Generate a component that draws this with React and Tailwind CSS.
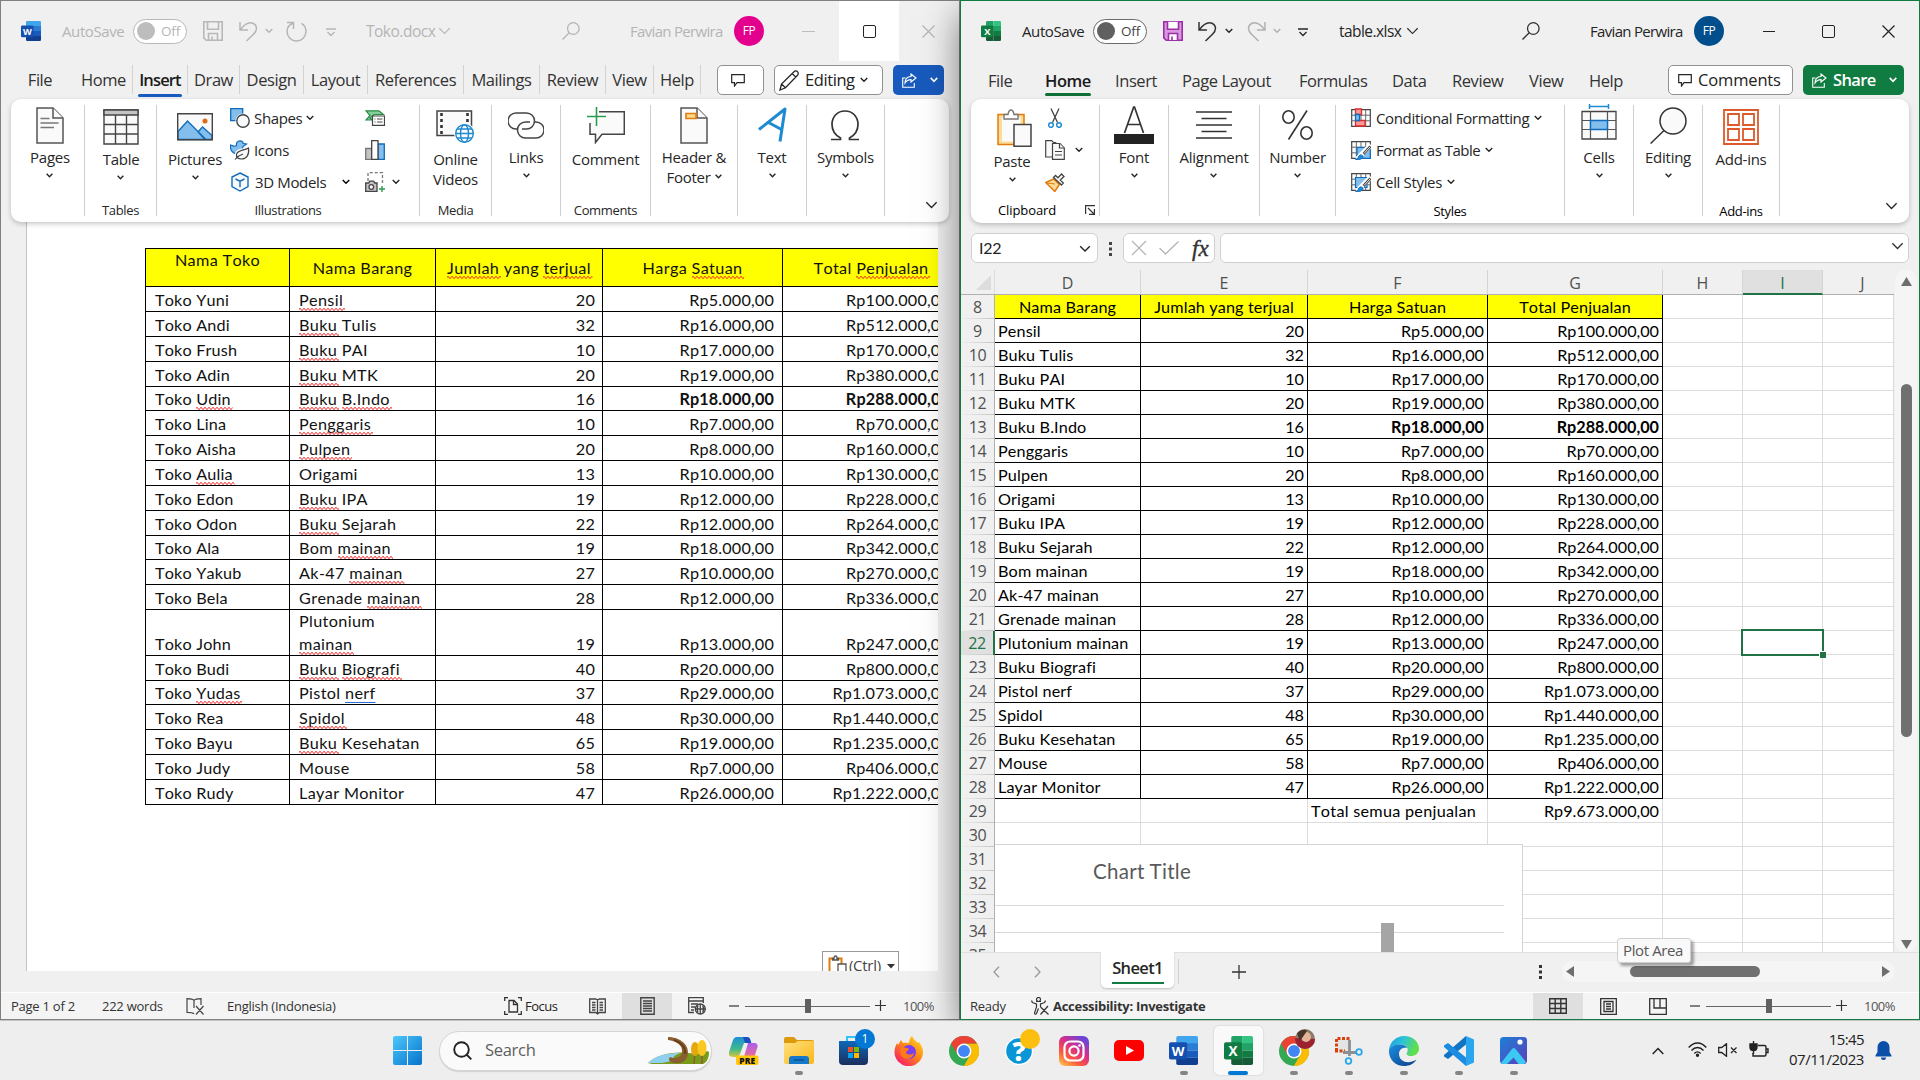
import React from "react";

/* ---------- small glyphs ---------- */
const Chev = ({ w = 8, className = "", sw = 1.4 }) => (
  <svg width={w} height={w * 0.6 + 1} viewBox="0 0 10 7" fill="none" stroke="currentColor" strokeWidth={(sw * 10) / w} className={className}>
    <path d="M.9 1l4.1 4.2L9.1 1" />
  </svg>
);

const WordLogo = ({ s = 20 }) => (
  <svg width={s} height={s} viewBox="0 0 32 32">
    <path d="M10 0h20a2 2 0 012 2v7H8V2a2 2 0 012-2z" fill="#41a5ee" />
    <path d="M8 8h24v8H8z" fill="#2b7cd3" />
    <path d="M8 16h24v8H8z" fill="#185abd" />
    <path d="M8 24h24v6a2 2 0 01-2 2H10a2 2 0 01-2-2z" fill="#103f91" />
    <rect x="0" y="7" width="20" height="19" rx="2" fill="#1650ae" />
    <text x="10" y="22" textAnchor="middle" fontSize="14.5" fontWeight="700" fill="#fff" fontFamily="Open Sans">W</text>
  </svg>
);

const ExcelLogo = ({ s = 20 }) => (
  <svg width={s} height={s} viewBox="0 0 32 32">
    <path d="M10 0h10v9H8V2a2 2 0 012-2z" fill="#21a366" />
    <path d="M20 0h10a2 2 0 012 2v7H20z" fill="#33c481" />
    <path d="M8 8h12v8H8z" fill="#107c41" />
    <path d="M20 8h12v8H20z" fill="#21a366" />
    <path d="M20 16h12v8H20z" fill="#107c41" />
    <path d="M8 16h12v16H10a2 2 0 01-2-2z" fill="#185c37" />
    <path d="M20 24h12v6a2 2 0 01-2 2H20z" fill="#185c37" />
    <rect x="0" y="7" width="20" height="19" rx="2" fill="#107c41" />
    <text x="10" y="22" textAnchor="middle" fontSize="15" fontWeight="700" fill="#fff" fontFamily="Open Sans">X</text>
  </svg>
);

const SaveIcon = ({ color, fill }) => (
  <svg width="20" height="20" viewBox="0 0 20 20" stroke={color} strokeWidth="1.6">
    <path d="M.8 .8h18.4v18.4H3.2L.8 16.8z" fill={fill} />
    <path d="M4.500 .8v7.500h11V.8" fill={fill === "none" ? "none" : "#fff"} />
    <path d="M5.500 19v-6.500h9V19M9 19v-3.500" fill={fill === "none" ? "none" : "#fff"} />
  </svg>
);

const Undo = ({ flip }) => (
  <svg width="19" height="21" viewBox="0 0 19 21" fill="none" stroke="currentColor" strokeWidth="1.5" className={flip ? "-scale-x-100" : ""}>
    <path d="M1 1v8h8M1.500 8.500C5 4 8 1.800 11.500 1.800c4 0 6 3 6 5.500 0 2.500-1 4-3 6L7.500 20" />
  </svg>
);

const Redo = () => (
  <svg width="21" height="21" viewBox="0 0 21 21" fill="none" stroke="currentColor" strokeWidth="1.5">
    <path d="M1 1.500h6.500V8M7 2.200C3.500 3.500 1 6.500 1 10.500a9.500 9.500 0 0019 0c0-3.500-1.600-6.500-4.500-8.200" />
  </svg>
);

const Qat = () => (
  <svg width="10" height="9" viewBox="0 0 10 9" fill="none" stroke="currentColor" strokeWidth="1.3">
    <path d="M0 1h10M1.500 4l3.500 3.500L8.500 4" />
  </svg>
);

const Search = ({ w = 18, fill = "none", sw = 1.3 }) => (
  <svg width={w} height={w} viewBox="0 0 18 18" fill="none" stroke="currentColor" strokeWidth={sw}>
    <circle cx="11.300" cy="6.500" r="5.800" fill={fill} />
    <path d="M7.200 10.800L.5 17.500" />
  </svg>
);

const Bubble = () => (
  <svg width="14" height="13" viewBox="0 0 14 13" fill="none" stroke="#262626" strokeWidth="1.2">
    <path d="M.7 .7h12.600v8H6L3.500 12V8.700H.7z" />
  </svg>
);

const ShareIcon = () => (
  <svg width="15" height="15" viewBox="0 0 15 15" fill="none" stroke="#fff" strokeWidth="1.1">
    <path d="M3.500 5H.7v9.300h11.600V10M9 1l5 4-5 4V6.600C6 6.600 4.500 7.500 3 10c0-4 2.500-6.300 6-6.500z" />
  </svg>
);

const Pencil = () => (
  <svg width="21" height="21" viewBox="0 0 21 21" fill="none" stroke="#262626" strokeWidth="1.3">
    <path d="M1 20l1.500-6L15 1.700a2.400 2.400 0 013.500 0 2.400 2.400 0 010 3.500L6.500 17.800zM13.200 3.500l3.600 3.600M2.500 14l4 3.800" />
  </svg>
);

/* ---------- ribbon icons ---------- */
const dk = "#444";
const PageIcon = ({ header }) => (
  <svg width="28" height="37" viewBox="0 0 28 37" fill="#fafafa" stroke="#555" strokeWidth="1.5">
    <path d="M1 1h16l10 10v25H1z" />
    <path d="M17 1v10h10" />
    {header ? <path d="M6 6.500h10v5H6z" fill="#fcd98a" stroke="#e07b0e" strokeWidth="1.600" /> : <path d="M4.500 11.500h9M4.500 16h18M4.500 20.500h13.500" stroke="#777" />}
  </svg>
);
const TableIcon = () => (
  <svg width="36" height="36" viewBox="0 0 36 36" fill="#fafafa" stroke="#444" strokeWidth="1.400">
    <path d="M1 1h34v34H1z" />
    <path d="M1 1h34v5H1z" fill="#c4c4c4" />
    <path d="M12.500 6v29M23.500 6v29M1 15.500h34M1 25h34" />
  </svg>
);
const PicIcon = () => (
  <svg width="36" height="28" viewBox="0 0 36 28">
    <path d="M.7 .7h34.600v26H.7z" fill="#fafafa" />
    <path d="M1 18.500l9.500-10.500L29 26.500H1zM21 19l4.500-5L35 22.500v4h-7z" fill="#83beec" stroke="#0f6cbd" strokeWidth="1.300" />
    <circle cx="28" cy="8" r="2.500" fill="#dd6b10" />
    <path d="M.7 .7h34.600v26H.7z" fill="none" stroke="#444" strokeWidth="1.400" />
  </svg>
);
const ShapesIcon = () => (
  <svg width="20" height="20" viewBox="0 0 20 20">
    <path d="M.7 .7h12v12h-12z" fill="#83beec" stroke="#0f6cbd" strokeWidth="1.300" />
    <circle cx="13" cy="13" r="7.600" fill="#fff" />
    <circle cx="13" cy="13" r="6.200" fill="#fafafa" stroke={dk} strokeWidth="1.400" />
  </svg>
);
const IconsIcon = () => (
  <svg width="20" height="20" viewBox="0 0 20 20">
    <path d="M.5 5c2 1 4 1.500 6 .8-.5-3 1-5 3.500-5 2 0 3 1 3.200 2.500l3.300.7-3.500 2.500c0 2-1 3.500-2.500 4.500L6 14C2 12.500 0 9 .5 5z" fill="#83beec" stroke="#0f6cbd" strokeWidth="1.200" />
    <path d="M18.500 8c1 7-2 11-7 11-3.500 0-5.500-2-5-4.500C7 10 13 11 18.500 8z" fill="#fafafa" stroke="#fff" strokeWidth="3.500" />
    <path d="M18.500 8c1 7-2 11-7 11-3.500 0-5.500-2-5-4.500C7 10 13 11 18.500 8zM5 19.500c2-2.500 4.500-4.500 8-5.500" fill="#fafafa" stroke={dk} strokeWidth="1.200" />
  </svg>
);
const CubeIcon = () => (
  <svg width="18" height="20" viewBox="0 0 18 20" fill="#fafafa" stroke="#0f6cbd" strokeWidth="1.400">
    <path d="M9 1l8 4v9.500L9 19l-8-4.500V5zM4.500 7L9 9.200 13.500 7M9 9.200v6" />
  </svg>
);
const SmartArt = () => (
  <svg width="20" height="16" viewBox="0 0 20 16">
    <path d="M1 .8h13l4.500 3.700H9L5 8l2.500 2L1 10l4-4.500z" fill="#83cf9a" stroke="#2a8b45" strokeWidth="1.200" />
    <path d="M7.500 6h12v9.300h-12z" fill="#fff" stroke={dk} strokeWidth="1.200" />
    <path d="M9.500 9h1M12 9h5.500M9.500 12h1M12 12h5.500" stroke={dk} />
  </svg>
);
const BarsIcon = () => (
  <svg width="20" height="20" viewBox="0 0 20 20" strokeWidth="1.300">
    <path d="M.7 8.500h6v11h-6z" fill="#c4c4c4" stroke="#777" />
    <path d="M13 4h6.300v15.300H13z" fill="#83beec" stroke="#0f6cbd" />
    <path d="M6.700 .7H13v18.600H6.700z" fill="#fff" stroke={dk} />
  </svg>
);
const ShotIcon = () => (
  <svg width="20" height="20" viewBox="0 0 20 20" fill="none">
    <path d="M3 9V.7h14.500V13" stroke="#777" strokeWidth="1.300" strokeDasharray="3 2" />
    <path d="M.7 11h3l1-1.800h4l1 1.800H12v8.300H.7z" fill="#c4c4c4" stroke={dk} strokeWidth="1.300" />
    <circle cx="6.300" cy="15" r="2.300" fill="#fff" stroke={dk} strokeWidth="1.300" />
    <path d="M17 14v6M14 17h6" stroke="#2a9b4c" strokeWidth="1.400" />
  </svg>
);
const VideoIcon = () => (
  <svg width="39" height="35" viewBox="0 0 39 35">
    <path d="M1 1h34.500v24.500H1z" fill="#fafafa" stroke="#444" strokeWidth="1.500" />
    <path d="M5.500 3v22M31.500 3v12" stroke="#333" strokeWidth="2.600" strokeDasharray="3 3" />
    <circle cx="28.500" cy="23.500" r="10.500" fill="#fff" />
    <g fill="none" stroke="#1e8ad1" strokeWidth="1.400">
      <circle cx="28.500" cy="23.500" r="8.800" fill="#fafafa" />
      <ellipse cx="28.500" cy="23.500" rx="4" ry="8.800" />
      <path d="M20 23.500h17M21 19h15M21 28h15" />
    </g>
  </svg>
);
const LinkIcon = () => (
  <svg width="36" height="27" viewBox="0 0 36 27" fill="none" stroke="#444" strokeWidth="1.500">
    <path d="M9 17H8A8 8 0 018 1h10.500a8 8 0 010 16H14" />
    <path d="M27 10h1a8 8 0 010 16H17.500a8 8 0 010-16H22" />
  </svg>
);
const CommentIcon = () => (
  <svg width="38" height="37" viewBox="0 0 38 37" fill="none">
    <path d="M12 4.700h25.300v22.600H15l-6.500 8.200v-8.200H3V16" fill="#fafafa" stroke="#444" strokeWidth="1.500" />
    <path d="M9.500 0v19M0 9.500h19" stroke="#fff" strokeWidth="4" />
    <path d="M9.500 0v19M0 9.500h19" stroke="#2a9b4c" strokeWidth="1.600" />
  </svg>
);
const AIcon = () => (
  <svg width="29" height="36" viewBox="0 0 29 36" fill="none" stroke="#1e8ad1" strokeWidth="3" strokeLinejoin="round">
    <path d="M1 22.500L27 2 22 34.500M10.500 15.500l13 7" />
  </svg>
);
const OmegaIcon = () => (
  <svg width="30" height="31" viewBox="0 0 30 31" fill="none" stroke="#333" strokeWidth="1.700">
    <path d="M1 29.500h9.500v-1.500C5 25 2 20.500 2 14.500 2 6.500 7.500 1 15 1s13 5.500 13 13.500c0 6-3 10.500-8.500 13.500v1.500H29" />
  </svg>
);
const PasteIcon = () => (
  <svg width="35" height="38" viewBox="0 0 35 38">
    <path d="M1 5.500h26v30H1z" fill="#fcdc98" stroke="#e07b0e" strokeWidth="1.500" />
    <path d="M5 8.500h18.500v24H5z" fill="#fafafa" />
    <path d="M7 5.500h4c.5-3 1.500-4.500 3-4.500s2.500 1.500 3 4.500h4v4.500H7z" fill="#fff" stroke="#777" strokeWidth="1.400" />
    <path d="M17 15.500h17v21.800H17z" fill="#fafafa" stroke="#444" strokeWidth="1.500" />
  </svg>
);
const CutIcon = () => (
  <svg width="14" height="20" viewBox="0 0 14 20" fill="none" strokeWidth="1.300">
    <path d="M3 .5l6.500 14M11 .5l-6.500 14" stroke={dk} />
    <circle cx="3" cy="17" r="2.300" stroke="#1e8ad1" strokeWidth="1.500" />
    <circle cx="11" cy="17" r="2.300" stroke="#1e8ad1" strokeWidth="1.500" />
  </svg>
);
const CopyIcon = () => (
  <svg width="20" height="20" viewBox="0 0 20 20" fill="#fafafa" stroke={dk} strokeWidth="1.200">
    <path d="M.7 .7h6l2 2h2V17H.7z" />
    <path d="M7.500 3.500H15l4.300 4.500v11.300H7.500z" />
    <path d="M14.500 3.500V8h4.500M10 11.500h7M10 15h7" />
  </svg>
);
const BrushIcon = () => (
  <svg width="20" height="19" viewBox="0 0 20 19">
    <path d="M.8 9.500l8-3.500 5.500 5.500-4.500 7z" fill="#fcdc98" stroke="#e07b0e" strokeWidth="1.500" />
    <path d="M2 10l8 1" stroke="#e07b0e" />
    <path d="M8.500 4.500l8 7.500 1.800-2-3-3L19 3.500 16.500 1 13 4.800l-2.500-2.300z" fill="#fafafa" stroke={dk} strokeWidth="1.300" />
  </svg>
);
const FontIcon = () => (
  <svg width="40" height="38" viewBox="0 0 40 38" fill="none">
    <path d="M10.500 27L19.700 1h.8L29.500 27M13.500 18.500h13" stroke="#333" strokeWidth="1.700" />
    <path d="M0 28h40v10H0z" fill="#222" />
  </svg>
);
const AlignIcon = () => (
  <svg width="36" height="28" viewBox="0 0 36 28" stroke="#333" strokeWidth="1.400">
    <path d="M0 1h36M5.500 7.500h25M0 14h36M5.500 20.500h25M0 27h36" />
  </svg>
);
const PctIcon = () => (
  <svg width="31" height="30" viewBox="0 0 31 30" fill="none" stroke="#333" strokeWidth="1.600">
    <ellipse cx="6.500" cy="7" rx="5.700" ry="6.200" />
    <ellipse cx="24.500" cy="23" rx="5.700" ry="6.200" />
    <path d="M25 .5L6.500 29.500" />
  </svg>
);
const GridMini = ({ kind }) => (
  <svg width="20" height="20" viewBox="0 0 20 20" fill="none">
    <path d="M.7 1.700h18.600v16.600H.7z" fill="#fff" stroke={dk} strokeWidth="1.200" />
    <path d="M.7 7.200h18.600M.7 12.800h18.600M5.300 1.700v16.600M10 1.700v16.600M14.700 1.700v16.600" stroke="#666" strokeWidth="1" />
    {kind === "cf" && (
      <g fill="#f99" stroke="#d92c2c" strokeWidth="1.300">
        <path d="M4.500 1h6v5.500h-6zM4.500 12.500h9.500V18H4.500z" />
        <path d="M4.500 6.500h4v6h-4z" fill="#83beec" stroke="#0f6cbd" />
      </g>
    )}
    {kind === "tbl" && <path d="M6 7.500h13.300v10.800H6z" fill="#83beec" stroke="#0f6cbd" strokeWidth="1.200" />}
    {kind === "cs" && <path d="M4.500 5.500h11.500v10H4.500z" fill="#83beec" stroke="#0f6cbd" strokeWidth="1.200" />}
    {kind !== "cf" && (
      <g>
        <path d="M20 5l-9 9-5 5.500" stroke="#fff" strokeWidth="5" />
        <path d="M19.500 6.500l-7 7.500" stroke={dk} strokeWidth="2.600" />
        <path d="M19 7l-6 6.500" stroke="#fff" strokeWidth=".9" />
        <path d="M4.500 19.300c2.500 0 2.500-1.500 3.500-3.500 1-1.500 3.500-1 4 .5.300 2-3 4-7.500 3z" fill="#1e8ad1" stroke="#0f6cbd" />
      </g>
    )}
  </svg>
);
const CellsIcon = () => (
  <svg width="36" height="36" viewBox="0 0 36 36" fill="none">
    <path d="M1 7.500h34V35H1z" fill="#fafafa" stroke={dk} strokeWidth="1.300" />
    <path d="M1 16.500h34M1 25.500h34M9.500 7.500V35M26.500 7.500V35" stroke="#555" strokeWidth="1.200" />
    <path d="M9.500 16.500h17v9h-17z" fill="#83beec" stroke="#0f6cbd" strokeWidth="1.400" />
    <path d="M8.500 0v5M27.500 0v5M8.500 2.500h19" stroke="#1e8ad1" strokeWidth="1.500" />
  </svg>
);
const EditFind = () => (
  <svg width="37" height="37" viewBox="0 0 37 37" fill="none" stroke="#333" strokeWidth="1.500">
    <circle cx="23" cy="14" r="13" fill="#fafafa" />
    <path d="M14 23.500L.6 36.500" />
  </svg>
);
const AddinsIcon = () => (
  <svg width="36" height="36" viewBox="0 0 36 36" fill="none" stroke="#dd5a2b" strokeWidth="1.800">
    <path d="M1 1h34v34H1z" />
    <path d="M5 5h11v11H5zM20 5h11v11H20zM5 20h11v11H5zM20 20h11v11H20z" />
  </svg>
);

/* ---------- shared chrome ---------- */
const Toggle = ({ border, dot, text }) => (
  <div className={`flex h-[25px] w-[54px] shrink-0 items-center rounded-full border-[1.5px] bg-white pl-[3px] text-[13.500px] ${border}`}>
    <span className={`size-[18px] rounded-full ${dot}`} />
    <span className={`ml-[6px] tracking-[-0.2px] ${text}`}>Off</span>
  </div>
);

const Big = ({ icon, label, label2, chev = true, low, x = "" }) => (
  <div className={`flex flex-col items-center text-[15px] leading-5 tracking-[-0.25px] text-[#262626] ${low ? "pt-[2px]" : ""} ${x}`}>
    <div className="flex h-[40px] items-center justify-center">{icon}</div>
    <div className="mt-[2px] whitespace-nowrap">{label}</div>
    {label2 && <div className="flex items-center gap-[4px] whitespace-nowrap">{label2}</div>}
    {chev && <Chev w={7} className="mt-[6px]" />}
  </div>
);
const Sep = () => <div className="h-[111px] w-px shrink-0 bg-[#cfcfcf]" />;
const Group = ({ w, label, children }) => (
  <div className={`flex h-[117px] shrink-0 flex-col items-center ${w}`}>
    {children}
    {label && <div className="mt-auto mb-[3px] text-[13px] leading-[18px] tracking-[-0.35px] text-[#262626]">{label}</div>}
  </div>
);
const Line = ({ icon, label, chev, gap = "gap-[5px]" }) => (
  <div className={`flex h-8 items-center text-[15px] tracking-[-0.35px] whitespace-nowrap text-[#262626] ${gap}`}>
    <span className="flex w-[20px] shrink-0 justify-center">{icon}</span>
    {label && <span>{label}</span>}
    {chev && <Chev w={8} />}
  </div>
);

const Zoomer = () => (
  <>
    <svg width="10" height="2" className="mb-[1px] shrink-0"><path d="M0 1h10" stroke="#333" strokeWidth="1.200" /></svg>
    <div className="ml-[6px] flex h-[14px] w-[125px] shrink-0 items-center">
      <div className="h-px w-[60px] bg-[#666]" />
      <div className="h-[14px] w-[6px] bg-[#606060]" />
      <div className="h-px flex-1 bg-[#666]" />
    </div>
    <svg width="11" height="11" className="mb-[1px] ml-[5px] shrink-0"><path d="M0 5.500h11M5.500 0v11" stroke="#333" strokeWidth="1.200" /></svg>
    <span className="mt-[2px] ml-[17px] tracking-[-0.5px] text-[#555]">100%</span>
  </>
);

/* ---------- Word ---------- */
const R = ({ children }) => (
  <span className="relative inline-block">
    {children}
    <svg className="absolute bottom-0 left-0 h-[4px] w-[calc(100%+2px)]"><rect width="100%" height="4" fill="url(#squiggle)" /></svg>
  </span>
);
const wordRows = [
  ["h-[25px]", "Toko Yuni", <R>Pensil</R>, "20", "Rp5.000,00", "Rp100.000,00"],
  ["h-[25px]", "Toko Andi", <><R>Buku</R> Tulis</>, "32", "Rp16.000,00", "Rp512.000,00"],
  ["h-[25px]", "Toko Frush", <><R>Buku</R> PAI</>, "10", "Rp17.000,00", "Rp170.000,00"],
  ["h-[25px]", "Toko Adin", <><R>Buku</R> MTK</>, "20", "Rp19.000,00", "Rp380.000,00"],
  ["h-[24px]", <>Toko <R>Udin</R></>, <><R>Buku</R> <R>B.Indo</R></>, "16", "Rp18.000,00", "Rp288.000,00", true],
  ["h-[25px]", "Toko Lina", <R>Penggaris</R>, "10", "Rp7.000,00", "Rp70.000,00"],
  ["h-[25px]", "Toko Aisha", <R>Pulpen</R>, "20", "Rp8.000,00", "Rp160.000,00"],
  ["h-[25px]", <>Toko <R>Aulia</R></>, "Origami", "13", "Rp10.000,00", "Rp130.000,00"],
  ["h-[25px]", "Toko Edon", <><R>Buku</R> IPA</>, "19", "Rp12.000,00", "Rp228.000,00"],
  ["h-[25px]", "Toko Odon", <><R>Buku</R> Sejarah</>, "22", "Rp12.000,00", "Rp264.000,00"],
  ["h-[24px]", "Toko Ala", <>Bom <R>mainan</R></>, "19", "Rp18.000,00", "Rp342.000,00"],
  ["h-[25px]", "Toko Yakub", <>Ak-47 <R>mainan</R></>, "27", "Rp10.000,00", "Rp270.000,00"],
  ["h-[25px]", "Toko Bela", <>Grenade <R>mainan</R></>, "28", "Rp12.000,00", "Rp336.000,00"],
  ["h-[46px]", "Toko John", <>Plutonium<br /><R>mainan</R></>, "19", "Rp13.000,00", "Rp247.000,00"],
  ["h-[25px]", "Toko Budi", <><R>Buku</R> <R>Biografi</R></>, "40", "Rp20.000,00", "Rp800.000,00"],
  ["h-[24px]", <>Toko <R>Yudas</R></>, <>Pistol <span className="underline decoration-[#2b6bd6] decoration-1 underline-offset-[3px]">nerf</span></>, "37", "Rp29.000,00", "Rp1.073.000,00"],
  ["h-[25px]", "Toko Rea", <R>Spidol</R>, "48", "Rp30.000,00", "Rp1.440.000,00"],
  ["h-[25px]", "Toko Bayu", <><R>Buku</R> Kesehatan</>, "65", "Rp19.000,00", "Rp1.235.000,00"],
  ["h-[25px]", "Toko Judy", "Mouse", "58", "Rp7.000,00", "Rp406.000,00"],
  ["h-[25px]", "Toko Rudy", "Layar Monitor", "47", "Rp26.000,00", "Rp1.222.000,00"],
];

const wc = "flex shrink-0 border-r border-b border-black";
const WordTable = () => (
  <div className="relative ml-[118px] mt-[26px] w-[815px] shrink-0 border-t border-l border-black font-[Lato,sans-serif] text-[16.200px] leading-[23px] tracking-[0.18px] text-[#111] [font-kerning:none] [font-variant-ligatures:none]">
    <svg className="absolute size-0">
      <defs>
        <pattern id="squiggle" width="4" height="4" patternUnits="userSpaceOnUse">
          <path d="M-1 3.700L1 1.200 3 3.700 5 1.200" fill="none" stroke="#f02828" strokeWidth="1" />
        </pattern>
      </defs>
    </svg>
    <div className="flex h-[38px] bg-[#ffff00] tracking-[0.350px]">
      <div className={`${wc} w-[144px] justify-center`}><span className="-mt-px">Nama Toko</span></div>
      <div className={`${wc} w-[146px] items-center justify-center`}>Nama Barang</div>
      <div className={`${wc} w-[167px] items-center justify-center whitespace-pre`}><R>Jumlah</R> yang <R>terjual</R></div>
      <div className={`${wc} w-[180px] items-center justify-center whitespace-pre`}>Harga <R>Satuan</R></div>
      <div className={`${wc} w-[177px] items-center justify-center whitespace-pre`}>Total <R>Penjualan</R></div>
    </div>
    {wordRows.map((r, i) => (
      <div key={i} className={`flex ${r[0]}`}>
        <div className={`${wc} w-[144px] items-end pl-[9px]`}><span>{r[1]}</span></div>
        <div className={`${wc} w-[146px] items-end pl-[9px] tracking-[0.350px]`}><span className="whitespace-nowrap">{r[2]}</span></div>
        <div className={`${wc} w-[167px] items-end justify-end pr-[7px]`}>{r[3]}</div>
        <div className={`${wc} w-[180px] items-end justify-end pr-[8px] ${r[6] ? "font-bold tracking-[0.150px]" : ""}`}>{r[4]}</div>
        <div className={`${wc} w-[177px] items-end justify-end pr-[9px] ${r[6] ? "font-bold tracking-[0.150px]" : ""}`}>{r[5]}</div>
      </div>
    ))}
  </div>
);

const WTab = ({ w, children, active, sep = true }) => (
  <div className={`flex h-[29px] shrink-0 items-center justify-center ${sep ? "border-r border-[#d2d2d2]" : ""} ${w}`}>
    <span className={`relative top-px ${active ? "font-semibold tracking-[-0.850px] text-[#1b1b1b]" : ""}`}>
      {children}
      {active && <span className={`absolute -inset-x-px top-[26px] h-[3px] rounded-full ${active}`} />}
    </span>
  </div>
);

const Word = () => (
  <div className="flex h-[1020px] w-[960px] shrink-0 flex-col border border-[#808080] bg-[#f0f0f0]">
    <div className="flex h-[60px] shrink-0 items-center text-[15px] tracking-[-0.4px] text-[#b5b5b5]">
      <div className="ml-[20px] w-[41px]"><WordLogo /></div>
      <div className="w-[71px] shrink-0">AutoSave</div>
      <Toggle border="border-[#b8b8b8]" dot="bg-[#bdbdbd]" text="text-[#b5b5b5]" />
      <div className="ml-[16px] w-[36px]"><SaveIcon color="#b8b8b8" fill="none" /></div>
      <div className="w-[26px]"><Undo /></div>
      <div className="w-[21px]"><Chev w={8} /></div>
      <div className="w-[40px]"><Redo /></div>
      <div className="mt-[2px] w-[40px]"><Qat /></div>
      <div className="w-[72px] pt-px text-[15.500px] tracking-[-0.5px]">Toko.docx</div>
      <div className="w-[124px]"><Chev w={13} sw={1.200} /></div>
      <div className="w-[68px]"><Search /></div>
      <div className="w-[104px] whitespace-nowrap tracking-[-0.68px]">Favian Perwira</div>
      <div className="flex size-[30px] shrink-0 items-center justify-center rounded-full bg-[#e3008c] text-[12px] text-white">FP</div>
      <div className="ml-[38px] h-px w-[13px] bg-[#bdbdbd]" />
      <div className="ml-[24px] flex h-[60px] w-[60px] shrink-0 items-center justify-center bg-white">
        <div className="size-[13px] rounded-[2px] border-[1.500px] border-[#222]" />
      </div>
      <svg width="13" height="13" className="ml-[23px]" stroke="#b5b5b5" strokeWidth="1.200"><path d="M.5.500l12 12M12.500.500l-12 12" /></svg>
    </div>

    <div className="flex h-[38px] shrink-0 items-start pt-[4px] text-[16.500px] tracking-[-0.420px] text-[#333]">
      <WTab w="w-[78px]" sep={false}>File</WTab>
      <WTab w="w-[54px] pr-[4px]">Home</WTab>
      <WTab w="w-[55px]" active="bg-[#185abd]">Insert</WTab>
      <WTab w="w-[52px]">Draw</WTab>
      <WTab w="w-[64px]">Design</WTab>
      <WTab w="w-[64px]">Layout</WTab>
      <WTab w="w-[96px]">References</WTab>
      <WTab w="w-[76px]">Mailings</WTab>
      <WTab w="w-[66px]">Review</WTab>
      <WTab w="w-[48px]">View</WTab>
      <WTab w="w-[47px]">Help</WTab>
      <div className="ml-[16px] flex h-[30px] w-[47px] shrink-0 items-center justify-center rounded-[5px] border border-[#919191] bg-white pr-[6px]"><Bubble /></div>
      <div className="ml-[10px] flex h-[30px] w-[109px] shrink-0 items-center rounded-[5px] border border-[#919191] bg-white pl-[4px] text-[#222]">
        <Pencil /><span className="mx-[5px]">Editing</span><Chev w={8} />
      </div>
      <div className="ml-[10px] flex h-[30px] w-[51px] shrink-0 items-center rounded-[5px] bg-[#185abd] pl-[9px] text-white"><ShareIcon /><Chev w={8} className="ml-[13px]" sw={1.700} /></div>
    </div>

    <div className="z-[1] ml-[10px] flex h-[123px] w-[938px] shrink-0 rounded-[10px] bg-white pt-[6px] shadow-[0_2px_5px_rgba(0,0,0,.22)]">
      <Group w="w-[73px]"><Big x="ml-[5px]" icon={<PageIcon />} label="Pages" /></Group>
      <Sep />
      <Group w="w-[71px]" label="Tables"><Big low x="ml-px" icon={<TableIcon />} label="Table" /></Group>
      <Sep />
      <div className="flex h-[117px] w-[262px] shrink-0 flex-col">
        <div className="flex">
          <Big low x="ml-[12px] w-[52px]" icon={<PicIcon />} label="Pictures" />
          <div className="ml-[9px] w-[135px] -mt-[3px]">
            <Line icon={<ShapesIcon />} label="Shapes" chev gap="gap-[4px]" />
            <Line icon={<IconsIcon />} label="Icons" gap="gap-[4px]" />
            <div className="flex items-center justify-between">
              <Line icon={<CubeIcon />} label="3D Models" />
              <Chev w={8} className="mr-[15px]" />
            </div>
          </div>
          <div className="-mt-[3px]">
            <Line icon={<SmartArt />} />
            <Line icon={<BarsIcon />} />
            <Line icon={<ShotIcon />} chev gap="gap-[7px]" />
          </div>
        </div>
        <div className="mt-auto mb-[3px] text-center text-[13px] leading-[18px] tracking-[-0.35px] text-[#262626]">Illustrations</div>
      </div>
      <Sep />
      <Group w="w-[71px]" label="Media"><Big low chev={false} icon={<VideoIcon />} label="Online" label2="Videos" /></Group>
      <Sep />
      <Group w="w-[68px]"><Big icon={<LinkIcon />} label="Links" /></Group>
      <Sep />
      <Group w="w-[89px]" label="Comments"><Big low chev={false} icon={<div className="-mt-[3px]"><CommentIcon /></div>} label="Comment" /></Group>
      <Sep />
      <Group w="w-[86px]"><Big chev={false} icon={<PageIcon header />} label="Header &amp;" label2={<>Footer <Chev w={7} /></>} /></Group>
      <Sep />
      <Group w="w-[68px]"><Big icon={<AIcon />} label="Text" /></Group>
      <Sep />
      <Group w="w-[77px]"><Big icon={<OmegaIcon />} label="Symbols" /></Group>
      <Sep />
      <div className="flex flex-1 items-end justify-end pr-[11px] pb-[12px] text-[#222]"><Chev w={13} sw={1.300} /></div>
    </div>

    <div className="flex h-[749px] shrink-0 pl-[25px]">
      <div className="flex w-[912px] flex-col overflow-hidden border-l border-[#c4c4c4] bg-white">
        <WordTable />
        <div className="mt-[146px] ml-[795px] flex h-[28px] w-[77px] shrink-0 items-start border border-[#999] pt-[3px] pl-[5px] text-[15px] tracking-[-0.3px] text-[#444]">
          <svg width="19" height="20" viewBox="0 0 19 20" fill="#fff"><path d="M1.500 3.500h12v16h-12z" stroke="#e07b0e" strokeWidth="2" /><path d="M4.500 5V3.500H6C6 2 6.500 1 7.500 1S9 2 9 3.500h1.500V5zM10 9h8v11h-8z" stroke="#555" strokeWidth="1.300" /></svg>
          <span className="ml-[2px] leading-[21px]">(Ctrl)</span>
          <svg width="8" height="5" className="mt-[9px] ml-[6px]"><path d="M0 0h8L4 4.500z" fill="#333" /></svg>
        </div>
      </div>
    </div>
    <div className="h-[21px] shrink-0" />
    <div className="flex h-[27px] shrink-0 items-center border-t border-white bg-[#f4f4f4] text-[13px] tracking-[-0.25px] whitespace-nowrap text-[#333]">
      <div className="ml-[10px] w-[91px] pt-[2px]">Page 1 of 2</div>
      <div className="w-[84px] pt-[2px]">222 words</div>
      <svg width="19" height="17" viewBox="0 0 19 17" fill="none" stroke="#444" strokeWidth="1.200" className="mr-[22px]"><path d="M8 2.500C7 1 5 .7 1 .7v13.600c3 0 6 .2 7 1.700M8 2.500C9 1 11 .7 15 .7V7M8 2.500V10M10 8l7.500 8.500M17.500 8L10 16.500" /></svg>
      <div className="w-[277px] pt-[2px]">English (Indonesia)</div>
      <svg width="18" height="18" viewBox="0 0 18 18" fill="none" stroke="#333" strokeWidth="1.300"><path d="M.7 4V.7H4M14 .7h3.300V4M.7 14v3.300H4M14 17.300h3.300V14M5 3.500h5l3.500 3.500v8H5zM9.500 3.500v4h4" /></svg>
      <div className="ml-[3px] w-[64px] pt-[2px] tracking-[-0.500px] text-[#222]">Focus</div>
      <svg width="17" height="17" viewBox="0 0 17 17" fill="none" stroke="#444" strokeWidth="1.300"><path d="M.7 1h6l1.800 1 1.800-1h6v13.500h-6L8.500 16l-1.800-1.500h-6zM8.500 2v14M3 4.500h3.500M3 7h3.500M3 9.500h3.500M3 12h3.500M10.500 4.500H14M10.500 7H14M10.500 9.500H14M10.500 12H14" /></svg>
      <div className="ml-[16px] flex h-[26px] w-[50px] items-center justify-center bg-[#dfdfdf]">
        <svg width="15" height="18" viewBox="0 0 15 18" fill="none" stroke="#444" strokeWidth="1.400"><path d="M.8 .8h13.400v16.400H.8zM3 4h9M3 6.500h9M3 9h9M3 11.500h9M3 14h9" /></svg>
      </div>
      <svg width="18" height="18" viewBox="0 0 18 18" fill="none" stroke="#444" strokeWidth="1.300" className="mr-[23px] ml-[16px]"><path d="M6 15.500H.7V.7h14.600V6M.7 4h14.600M3 7h7M3 10h4M3 13h3" /><circle cx="12.300" cy="12" r="5" /><path d="M7.500 12h10M12.300 7v10M10 8.500c-1 2-1 5 0 7M14.700 8.500c1 2 1 5 0 7" /></svg>
      <Zoomer />
    </div>
  </div>
);

/* ---------- Excel ---------- */
const xlRows = [
  ["Pensil", "20", "Rp5.000,00", "Rp100.000,00"],
  ["Buku Tulis", "32", "Rp16.000,00", "Rp512.000,00"],
  ["Buku PAI", "10", "Rp17.000,00", "Rp170.000,00"],
  ["Buku MTK", "20", "Rp19.000,00", "Rp380.000,00"],
  ["Buku B.Indo", "16", "Rp18.000,00", "Rp288.000,00"],
  ["Penggaris", "10", "Rp7.000,00", "Rp70.000,00"],
  ["Pulpen", "20", "Rp8.000,00", "Rp160.000,00"],
  ["Origami", "13", "Rp10.000,00", "Rp130.000,00"],
  ["Buku IPA", "19", "Rp12.000,00", "Rp228.000,00"],
  ["Buku Sejarah", "22", "Rp12.000,00", "Rp264.000,00"],
  ["Bom mainan", "19", "Rp18.000,00", "Rp342.000,00"],
  ["Ak-47 mainan", "27", "Rp10.000,00", "Rp270.000,00"],
  ["Grenade mainan", "28", "Rp12.000,00", "Rp336.000,00"],
  ["Plutonium mainan", "19", "Rp13.000,00", "Rp247.000,00"],
  ["Buku Biografi", "40", "Rp20.000,00", "Rp800.000,00"],
  ["Pistol nerf", "37", "Rp29.000,00", "Rp1.073.000,00"],
  ["Spidol", "48", "Rp30.000,00", "Rp1.440.000,00"],
  ["Buku Kesehatan", "65", "Rp19.000,00", "Rp1.235.000,00"],
  ["Mouse", "58", "Rp7.000,00", "Rp406.000,00"],
  ["Layar Monitor", "47", "Rp26.000,00", "Rp1.222.000,00"],
];
const cw = ["w-[146px]", "w-[167px]", "w-[180px]", "w-[175px]", "w-[80px]", "w-[80px]", "w-[71px]"];

const XRow = ({ n }) => {
  const head = n === 8;
  const data = n >= 9 && n <= 28 ? xlRows[n - 9] : null;
  let vals = ["", "", "", ""];
  if (head) vals = ["Nama Barang", "Jumlah yang terjual", "Harga Satuan", "Total Penjualan"];
  if (data) vals = data;
  if (n === 29) vals = ["", "", "Total semua penjualan", "Rp9.673.000,00"];
  const sel = n === 22;
  return (
    <div className="flex h-[24px] shrink-0">
      <div className={`flex w-[34px] shrink-0 flex-col text-[16px] tracking-[-0.3px] ${sel ? "border-r-2 border-[#217346] bg-[#e0e0e0] text-[#217346]" : "border-r border-[#b0b0b0] text-[#505050]"}`}>
        <div className="flex h-[23px] items-center justify-center font-['Open_Sans',sans-serif] leading-none">{n}</div>
        <div className="h-px bg-linear-to-r from-transparent to-[#c4c4c4]" />
      </div>
      {cw.map((w, i) => {
        const dark = i < 4 && n <= 28;
        const align = head ? "justify-center tracking-[0.130px]" : i === 0 ? "pl-[3px] tracking-[0.130px]" : n === 29 && i === 2 ? "pl-[3px] tracking-[0.280px]" : "justify-end pr-[3px]";
        return (
          <div
            key={i}
            className={`relative flex shrink-0 items-center border-r border-b pt-[1px] whitespace-nowrap ${dark ? "border-black" : "border-[#dcdcdc]"} ${head && i < 4 ? "bg-[#ffff00]" : ""} ${align} ${w} ${n === 13 && (i === 2 || i === 3) ? "font-bold" : ""}`}
          >
            {vals[i]}
            {sel && i === 5 && (
              <div className="absolute -top-[2px] -right-[2px] -bottom-[2px] -left-[2px] z-10 border-2 border-[#217346]">
                <div className="absolute -right-[4px] -bottom-[4px] size-[7px] border-t border-l border-white bg-[#217346]" />
              </div>
            )}
          </div>
        );
      })}
    </div>
  );
};

const XTab = ({ w, children, active }) => (
  <div className={`shrink-0 leading-[31px] ${w}`}>
    <span className={`relative inline-block ${active ? "font-semibold tracking-[-0.450px] text-[#1b1b1b]" : ""}`}>
      {children}
      {active && <span className="absolute inset-x-0 top-[28px] h-[3px] rounded-full bg-[#0f7037]" />}
    </span>
  </div>
);

const Excel = () => (
  <div className="relative z-10 flex h-[1020px] w-[960px] shrink-0 flex-col border border-[#107c41] bg-[#f0f0f0] shadow-[0_14px_34px_rgba(0,0,0,.5)]">
    <div className="flex h-[60px] shrink-0 items-center text-[15px] tracking-[-0.4px] text-[#262626]">
      <div className="ml-[20px] w-[41px]"><ExcelLogo /></div>
      <div className="w-[71px] shrink-0">AutoSave</div>
      <Toggle border="border-[#6b6b6b]" dot="bg-[#606060]" text="text-[#444]" />
      <div className="ml-[16px] w-[35px]"><SaveIcon color="#9c2fa8" fill="#d998df" /></div>
      <div className="w-[27px] text-[#333]"><Undo /></div>
      <div className="w-[22px]"><Chev w={8} /></div>
      <div className="w-[26px] text-[#b0b0b0]"><Undo flip /></div>
      <div className="w-[25px] text-[#b0b0b0]"><Chev w={8} /></div>
      <div className="mt-[2px] w-[41px]"><Qat /></div>
      <div className="w-[67px] pt-px text-[15.500px] tracking-[-0.550px]">table.xlsx</div>
      <div className="w-[116px]"><Chev w={13} sw={1.200} /></div>
      <div className="w-[68px] text-[#333]"><Search /></div>
      <div className="w-[104px] whitespace-nowrap tracking-[-0.68px]">Favian Perwira</div>
      <div className="flex size-[30px] shrink-0 items-center justify-center rounded-full bg-[#004e8c] text-[12px] text-white">FP</div>
      <div className="ml-[39px] h-px w-[12px] bg-[#222]" />
      <div className="ml-[47px] size-[13px] rounded-[2px] border-[1.500px] border-[#222]" />
      <svg width="13" height="13" className="ml-[47px]" stroke="#222" strokeWidth="1.200"><path d="M.5.500l12 12M12.500.500l-12 12" /></svg>
    </div>

    <div className="flex h-[38px] shrink-0 pt-[4px] pl-[27px] text-[16.500px] tracking-[-0.420px] whitespace-nowrap text-[#333]">
      <XTab w="w-[57px]">File</XTab>
      <XTab w="w-[70px]" active>Home</XTab>
      <XTab w="w-[67px]">Insert</XTab>
      <XTab w="w-[117px]">Page Layout</XTab>
      <XTab w="w-[93px]">Formulas</XTab>
      <XTab w="w-[60px]">Data</XTab>
      <XTab w="w-[77px]">Review</XTab>
      <XTab w="w-[60px]">View</XTab>
      <XTab w="w-[79px]">Help</XTab>
      <div className="flex h-[30px] w-[125px] shrink-0 items-center rounded-[5px] border border-[#919191] bg-white pl-[9px] text-[#222]"><Bubble /><span className="ml-[6px] tracking-[-0.150px]">Comments</span></div>
      <div className="ml-[10px] flex h-[30px] w-[101px] shrink-0 items-center rounded-[5px] bg-[#107c41] pl-[9px] text-white"><ShareIcon /><span className="ml-[6px] font-semibold tracking-[-0.600px]">Share</span><Chev w={8} className="ml-[13px]" sw={1.700} /></div>
    </div>

    <div className="ml-[10px] flex h-[124px] w-[938px] shrink-0 rounded-[10px] bg-white pt-[6px] shadow-[0_2px_5px_rgba(0,0,0,.22)]">
      <div className="flex h-[117px] w-[128px] shrink-0 flex-col">
        <div className="flex">
          <div className="ml-[20px] w-[42px] pt-[4px]"><Big icon={<div className="-mt-[3px] ml-[5px]"><PasteIcon /></div>} label="Paste" /></div>
          <div className="-mt-[3px] ml-[12px]">
            <Line icon={<CutIcon />} />
            <Line icon={<CopyIcon />} chev gap="gap-[10px]" />
            <Line icon={<BrushIcon />} />
          </div>
        </div>
        <div className="mt-auto mb-[3px] flex items-center justify-between pl-[27px] text-[13px] leading-[18px] tracking-[-0.1px]">
          <span>Clipboard</span>
          <svg width="10" height="10" viewBox="0 0 10 10" fill="none" stroke="#333" strokeWidth="1.200" className="mr-[4px]"><path d="M.6 9V.6H10M3 3l6 6M9.400 4v5.400H4" /></svg>
        </div>
      </div>
      <Sep />
      <Group w="w-[68px]"><Big icon={<FontIcon />} label="Font" /></Group>
      <Sep />
      <Group w="w-[90px]"><Big icon={<AlignIcon />} label="Alignment" /></Group>
      <Sep />
      <Group w="w-[75px]"><Big icon={<PctIcon />} label="Number" /></Group>
      <Sep />
      <div className="flex h-[117px] w-[228px] shrink-0 flex-col">
        <div className="-mt-[3px] pl-[15px]">
          <Line icon={<GridMini kind="cf" />} label="Conditional Formatting" chev />
          <Line icon={<GridMini kind="tbl" />} label={<span className="tracking-[-0.500px]">Format as Table</span>} chev />
          <Line icon={<GridMini kind="cs" />} label="Cell Styles" chev />
        </div>
        <div className="mt-auto mb-[2px] text-center text-[13px] leading-[18px] tracking-[-0.350px]">Styles</div>
      </div>
      <Sep />
      <Group w="w-[68px]"><Big icon={<div className="-mt-[7px]"><CellsIcon /></div>} label="Cells" /></Group>
      <Sep />
      <Group w="w-[68px]"><Big icon={<EditFind />} label="Editing" /></Group>
      <Sep />
      <div className="flex h-[117px] w-[76px] shrink-0 flex-col items-center">
        <Big low chev={false} icon={<AddinsIcon />} label="Add-ins" />
        <div className="mt-auto mb-[2px] text-[13px] leading-[18px] tracking-[-0.350px]">Add-ins</div>
      </div>
      <Sep />
      <div className="flex flex-1 items-end justify-end pr-[11px] pb-[12px] text-[#222]"><Chev w={13} sw={1.300} /></div>
    </div>

    <div className="flex h-[47px] shrink-0 items-start pt-[10px] pl-[10px]">
      <div className="flex h-[30px] w-[127px] items-center justify-between rounded-[6px] border border-[#d0d0d0] bg-white pr-[6px] pl-[7px] font-[Lato,sans-serif] text-[16px] tracking-[-0.300px] text-[#222]">I22<Chev w={12} sw={1.400} className="mt-[2px]" /></div>
      <svg width="3" height="14" className="mt-[9px] ml-[11px]" fill="#444"><path d="M0 0h3v3H0zM0 5.500h3v3H0zM0 11h3v3H0z" /></svg>
      <div className="ml-[11px] flex h-[30px] w-[92px] items-center rounded-[6px] border border-[#d0d0d0] bg-white pl-[7px]">
        <svg width="16" height="16" stroke="#b5b5b5" strokeWidth="1.300"><path d="M1 1l14 14M15 1L1 15" /></svg>
        <svg width="20" height="14" fill="none" stroke="#b5b5b5" strokeWidth="1.300" className="ml-[12px]"><path d="M.5 7l6 6L19.500.500" /></svg>
        <span className="ml-[13px] font-['Liberation_Serif',serif] text-[23px] leading-none text-[#333] italic [-webkit-text-stroke:0.400px_#333]">fx</span>
      </div>
      <div className="ml-[5px] flex h-[30px] w-[689px] items-center justify-end rounded-[6px] border border-[#d0d0d0] bg-white pr-[4px] text-[#333]"><Chev w={13} sw={1.400} className="-mt-[4px]" /></div>
    </div>

    <div className="flex h-[682px] shrink-0">
      <div className="relative flex w-[933px] shrink-0 flex-col overflow-hidden">
        <div className="flex h-[25px] shrink-0 border-b border-[#b0b0b0] text-[16px] text-[#505050]">
          <div className="flex w-[34px] shrink-0 items-center justify-end border-r border-[#dcdcdc] pr-[3px]"><svg width="15" height="15"><path d="M15 0v15H0z" fill="#dcdcdc" /></svg></div>
          {["D", "E", "F", "G", "H", "I", "J"].map((c, i) => (
            <div key={c} className={`flex shrink-0 items-center justify-center border-r border-[#d4d4d4] pt-[2px] leading-none ${c === "I" ? "-mb-px border-b-2 border-b-[#217346] bg-[#e0e0e0] text-[#217346]" : ""} ${c === "J" ? "border-r-0 pl-[8px]" : ""} ${cw[i]}`}>{c}</div>
          ))}
        </div>
        <div className="flex h-[657px] flex-col overflow-hidden font-[Lato,sans-serif] text-[16.200px] leading-[22px] text-black [font-kerning:none] [font-variant-ligatures:none]">
          <div className="bg-[linear-gradient(90deg,#f0f0f0_33px,#fff_33px)]">
            {Array.from({ length: 28 }, (_, i) => <XRow key={i} n={i + 8} />)}
          </div>
        </div>
        <div className="absolute top-[574px] left-[34px] h-[120px] w-[528px] border-t border-r border-[#d4d4d4] bg-white pt-[12px] font-[Lato,sans-serif] text-[#595959]">
          <div className="ml-[98px] h-[48px] text-[20.500px] leading-[28px] tracking-[0.300px]">Chart Title</div>
          <div className="h-px w-[509px] bg-[#d9d9d9]" />
          <div className="flex h-[47px] w-[509px] items-end">
            <div className="h-full w-[386px] pt-[26px]"><div className="h-px bg-[#d9d9d9]" /></div>
            <div className="h-[30px] w-[13px] bg-[#a5a5a5]" />
            <div className="h-full flex-1 pt-[26px]"><div className="h-px bg-[#d9d9d9]" /></div>
          </div>
        </div>
      </div>
      <div className="ml-[1px] flex w-[22px] flex-col items-center rounded-[10px] bg-[#f5f5f5]">
        <svg width="11" height="9" className="mt-[7px]"><path d="M5.500 0L11 9H0z" fill="#6e6e6e" /></svg>
        <div className="mt-[98px] h-[353px] w-[11px] rounded-full bg-[#707070]" />
        <svg width="11" height="9" className="mt-[203px]"><path d="M0 0h11L5.500 9z" fill="#6e6e6e" /></svg>
      </div>
    </div>

    <div className="relative flex h-[40px] shrink-0 items-center border-t border-[#e0e0e0] pb-[2px] text-[#262626]">
      <svg width="7" height="12" fill="none" stroke="#999" strokeWidth="1.300" className="ml-[32px]"><path d="M6 .7L1 6l5 5.300" /></svg>
      <svg width="7" height="12" fill="none" stroke="#999" strokeWidth="1.300" className="ml-[34px]"><path d="M1 .7L6 6l-5 5.300" /></svg>
      <div className="-mt-[3px] ml-[60px] flex h-[36px] w-[73px] flex-col items-center rounded-b-[5px] bg-white shadow-[0_1px_2px_rgba(0,0,0,.2)]">
        <div className="mt-[4px] w-[54px] text-center text-[16.500px] leading-[24px] font-semibold tracking-[-0.650px]">Sheet1</div>
        <div className="mt-[2px] h-[2px] w-[52px] bg-[#107c41]" />
      </div>
      <div className="ml-[4px] h-[25px] w-px bg-[#d0d0d0]" />
      <svg width="14" height="14" stroke="#333" strokeWidth="1.300" className="ml-[53px]"><path d="M0 7h14M7 0v14" /></svg>
      <svg width="3" height="14" className="ml-[293px]" fill="#333"><path d="M0 0h3v3H0zM0 5.500h3v3H0zM0 11h3v3H0z" /></svg>
      <div className="ml-[20px] flex h-[21px] w-[333px] items-center rounded-full bg-[#f5f5f5]">
        <svg width="8" height="11" className="ml-[4px]"><path d="M8 0v11L0 5.500z" fill="#6e6e6e" /></svg>
        <div className="ml-[56px] h-[11px] w-[130px] rounded-full bg-[#707070]" />
        <svg width="8" height="11" className="ml-[122px]"><path d="M0 0v11l8-5.500z" fill="#6e6e6e" /></svg>
      </div>
      <div className="absolute -top-[15px] left-[656px] flex h-[25px] w-[74px] items-center justify-center rounded-[3px] border border-[#d0d0d0] bg-[#f9f9f9] pr-[2px] text-[15px] tracking-[-0.400px] text-[#575757] shadow-[3px_3px_3px_rgba(0,0,0,.35)]">Plot Area</div>
    </div>

    <div className="flex h-[27px] shrink-0 items-center border-t border-white bg-[#f4f4f4] text-[13px] tracking-[-0.250px] whitespace-nowrap text-[#333]">
      <div className="ml-[9px] w-[61px] pt-[2px]">Ready</div>
      <svg width="18" height="18" viewBox="0 0 18 18" fill="none" stroke="#333" strokeWidth="1.200"><circle cx="7.500" cy="2.500" r="2" /><path d="M1 3.500c-.5 1 0 1.800 1 2.200L5.500 7v3l-2 6c0 1.500 1.500 1.500 2 .5l2-5M14 3.500c.5 1 0 1.800-1 2.200L9.500 7v3M5 4.500h5M9.500 10l8 7.500M17 9l-7.500 8.500" /></svg>
      <div className="ml-[4px] w-[480px] pt-[2px] font-bold tracking-[-0.280px]">Accessibility: Investigate</div>
      <div className="flex h-[26px] w-[50px] items-center justify-center bg-[#dfdfdf]">
        <svg width="18" height="16" viewBox="0 0 18 16" fill="none" stroke="#333" strokeWidth="1.400"><path d="M.7 .7h16.600v14.600H.7zM.7 5.500h16.600M.7 10.500h16.600M6.200 .7v14.600M11.800 .7v14.600" /></svg>
      </div>
      <svg width="17" height="17" viewBox="0 0 17 17" fill="none" stroke="#333" strokeWidth="1.300" className="ml-[17px]"><path d="M.7 .7h15.600v15.600H.7zM4 3.500h9v10H4zM6 6h5M6 8.500h5M6 11h5" /></svg>
      <svg width="18" height="17" viewBox="0 0 18 17" fill="none" stroke="#333" strokeWidth="1.300" className="mr-[23px] ml-[32px]"><path d="M.7 .7h16.600v15.600H.7zM5 .7V10h12M11 .7V10" /></svg>
      <Zoomer />
    </div>
  </div>
);

/* ---------- taskbar ---------- */
const Chrome = () => (
  <svg width="30" height="30" viewBox="0 0 48 48">
    <circle cx="24" cy="24" r="24" fill="#34a853" />
    <path d="M44.800 12A24 24 0 0124 48l10.400-18a12 12 0 000-12z" fill="#fbbc04" />
    <path d="M44.800 12H24a12 12 0 0110.400 18L24 48A24 24 0 0044.800 12z" fill="#fbbc04" />
    <path d="M3.200 12L13.600 30 24 24V12h20.800A24 24 0 003.200 12z" fill="#ea4335" />
    <circle cx="24" cy="24" r="12" fill="#fff" />
    <circle cx="24" cy="24" r="9.500" fill="#4285f4" />
  </svg>
);
const Slot = ({ children, dot, active, badge }) => (
  <div className={`relative flex h-[49px] w-[49px] shrink-0 items-center justify-center rounded-[5px] ${active ? "bg-[#f9f9f9] shadow-[0_0_2px_rgba(0,0,0,.2)]" : ""}`}>
    {children}
    {badge}
    {dot && <div className="absolute bottom-0 left-[21px] h-[4px] w-[8px] rounded-full bg-[#858585]" />}
    {active && <div className="absolute bottom-0 left-[14px] h-[4px] w-[20px] rounded-full bg-[#0078d4]" />}
  </div>
);

const Taskbar = () => (
  <div className="relative z-20 flex h-[60px] w-[1920px] shrink-0 items-center border-t border-[#c4c4c4] bg-[#eeeeee]">
    <svg width="29" height="29" viewBox="0 0 29 29" className="ml-[393px] shrink-0">
      <defs><linearGradient id="win" x1="0" y1="0" x2="1" y2="1" gradientUnits="objectBoundingBox"><stop offset="0" stopColor="#4cc8fb" /><stop offset="1" stopColor="#0672cb" /></linearGradient></defs>
      <path d="M2 0h12v14H0V2a2 2 0 012-2zM15 0h12a2 2 0 012 2v12H15zM0 15h14v14H2a2 2 0 01-2-2zM15 15h14v12a2 2 0 01-2 2H15z" fill="url(#win)" />
    </svg>
    <div className="ml-[17px] flex h-[40px] w-[273px] shrink-0 items-center rounded-full border border-[#d6d6d6] bg-[#fafafa] pl-[13px] shadow-[0_1px_1px_rgba(0,0,0,.12)]">
      <svg width="19" height="19" viewBox="0 0 19 19" fill="none" stroke="#222" strokeWidth="1.900"><circle cx="8.500" cy="8.500" r="7.300" fill="#fff" /><path d="M13.500 13.500l4.800 4.800" /></svg>
      <span className="ml-[13px] w-[163px] text-[16.500px] tracking-[-0.300px] text-[#5f5f5f]">Search</span>
      <svg width="61" height="30" viewBox="0 0 61 30">
        <path d="M0 27C8 19 25 15 40 17s19-4 21-1c0 6-2 10-6 12H4z" fill="#7a9a1a" />
        <path d="M0 27c8-8 20-10 32-10-4 2-7 3-6 5s-5 4-12 5z" fill="#8fd0ee" />
        <path d="M20 1c10 0 21 6 20 17-1 8-8 10-14 9-5-1-6-4-4-6 5 2 11 1 12-5 1-7-6-11-14-12z" fill="#8a5f30" />
        <path d="M26 4c8 3 12 8 11 14" fill="none" stroke="#5f3c18" strokeWidth="1.500" />
        <path d="M46 28l1-11M54 28V13" stroke="#8a5f30" strokeWidth="1.500" />
        <ellipse cx="47" cy="13" rx="4" ry="7" fill="#e3a90c" />
        <ellipse cx="54" cy="12" rx="4.500" ry="8" fill="#fbc81f" />
      </svg>
    </div>
    <div className="ml-[7px] flex shrink-0 gap-[6px]">
      <Slot>
        <svg width="30" height="28" viewBox="0 0 30 28">
          <defs>
            <linearGradient id="cpa" x1="0" y1="0" x2="0" y2="1"><stop offset="0" stopColor="#1b8fd6" /><stop offset=".6" stopColor="#3fb98c" /><stop offset="1" stopColor="#d8c53a" /></linearGradient>
            <linearGradient id="cpb" x1="0" y1="0" x2="0" y2="1"><stop offset="0" stopColor="#a95cf0" /><stop offset="1" stopColor="#f2708a" /></linearGradient>
          </defs>
          <path d="M8 0h9c2 0 3 1 3.500 3l.5 3h-6L11 17c-1 2-2 3-4 3H4c-3 0-5-2-4-5L4 3c1-2 2-3 4-3z" fill="url(#cpa)" />
          <path d="M14 0h4c2 0 3 1 3.500 3l.8 3H16z" fill="#1c4fc4" />
          <path d="M19 6h6c3 0 4 2 3.500 4L25 21H12c2 0 3-1 3.500-3z" fill="url(#cpb)" />
          <rect x="7" y="18.500" width="22.500" height="9.500" rx="2" fill="#fdc80a" />
          <text x="18.200" y="26.500" textAnchor="middle" fontSize="8.500" fontWeight="800" fill="#111" fontFamily="Open Sans">PRE</text>
        </svg>
      </Slot>
      <Slot dot>
        <svg width="30" height="27" viewBox="0 0 30 27">
          <defs><linearGradient id="fold" x1="0" y1="0" x2="1" y2="1"><stop offset="0" stopColor="#ffe080" /><stop offset="1" stopColor="#fcb714" /></linearGradient></defs>
          <path d="M0 2a2 2 0 012-2h8l3 3h15a2 2 0 012 2v6H0z" fill="#dd9a0c" />
          <path d="M0 6h11l3-2h14a2 2 0 012 2v19a2 2 0 01-2 2H2a2 2 0 01-2-2z" fill="url(#fold)" />
          <path d="M5 27v-5a3 3 0 013-3h14a3 3 0 013 3v5z" fill="#1579cb" />
          <path d="M10 23h10" stroke="#0a4a8a" strokeWidth="1.300" />
        </svg>
      </Slot>
      <Slot badge={<div className="absolute top-[3px] left-[26px] flex size-[20px] items-center justify-center rounded-full bg-[#0078d4] text-[12px] text-white">1</div>}>
        <svg width="29" height="29" viewBox="0 0 29 29">
          <defs><linearGradient id="st" x1="0" y1="0" x2="0" y2="1"><stop offset="0" stopColor="#0f68b8" /><stop offset="1" stopColor="#1b2f5c" /></linearGradient></defs>
          <path d="M8 6V1h13v5" fill="none" stroke="#31c1f5" strokeWidth="2" />
          <path d="M0 5h29v20a4 4 0 01-4 4H4a4 4 0 01-4-4z" fill="url(#st)" />
          <path d="M9 11h5v5H9z" fill="#f25022" /><path d="M15 11h5v5h-5z" fill="#7fba00" /><path d="M9 17h5v5H9z" fill="#00a4ef" /><path d="M15 17h5v5h-5z" fill="#ffb900" />
        </svg>
      </Slot>
      <Slot>
        <svg width="29" height="30" viewBox="0 0 29 30">
          <defs>
            <linearGradient id="ffx" x1="1" y1="0" x2=".2" y2="1"><stop offset="0" stopColor="#ffe226" /><stop offset=".5" stopColor="#ff8a16" /><stop offset="1" stopColor="#f5156c" /></linearGradient>
          </defs>
          <path d="M18 0c1 3 4 5 6 7l1-1c2 3 4 6 4 10a14 14 0 01-28.500 0C.5 12 2 9 3 7l1 2 3-5 2 3c2-.5 4-.5 6 0 0-3 1-5 3-7z" fill="url(#ffx)" />
          <circle cx="15" cy="16" r="7" fill="#7a3ff0" />
          <path d="M8 11c2 1 5 0 7 2-1 2-3 2-3 4 2 2 5 2 8 0-1 5-6 7-10 5s-5-7-2-11z" fill="#ff7a1a" />
        </svg>
      </Slot>
      <Slot><Chrome /></Slot>
      <Slot badge={<div className="absolute top-[3px] left-[26px] size-[20px] rounded-full bg-[#fdbf0f]" />}>
        <svg width="28" height="30" viewBox="0 0 28 30"><circle cx="14" cy="15" r="14" fill="#fff" /><circle cx="14" cy="15" r="12.800" fill="#0a95d6" /><text x="14" y="24.500" textAnchor="middle" fontSize="26" fontWeight="800" fill="#fff" fontFamily="Open Sans">?</text></svg>
      </Slot>
      <Slot>
        <svg width="30" height="30" viewBox="0 0 30 30">
          <defs><linearGradient id="ig" x1="0" y1="1" x2=".7" y2="0"><stop offset="0" stopColor="#ffd150" /><stop offset=".35" stopColor="#fb5a3c" /><stop offset=".65" stopColor="#d92d8a" /><stop offset="1" stopColor="#6a45d8" /></linearGradient></defs>
          <rect width="30" height="30" rx="6" fill="url(#ig)" />
          <g fill="none" stroke="#fff" strokeWidth="2.200"><rect x="5.500" y="5.500" width="19" height="19" rx="5.500" /><circle cx="15" cy="15" r="4.600" /></g>
          <circle cx="20.500" cy="9.500" r="1.300" fill="#fff" />
        </svg>
      </Slot>
      <Slot><svg width="30" height="21" viewBox="0 0 30 21"><rect width="30" height="21" rx="5" fill="#f00" /><path d="M12 6l8 4.500-8 4.500z" fill="#fff" /></svg></Slot>
      <Slot dot><WordLogo s={29} /></Slot>
      <Slot active><ExcelLogo s={29} /></Slot>
      <Slot dot badge={<svg width="20" height="20" viewBox="0 0 20 20" className="absolute top-[3px] left-[26px]"><defs><clipPath id="av"><circle cx="10" cy="10" r="10" /></clipPath></defs><g clipPath="url(#av)"><path d="M0 0h20v20H0z" fill="#8c7a6a" /><path d="M0 9l20 1v10H0z" fill="#9c2230" /><circle cx="11" cy="8" r="5" fill="#e3b598" /><path d="M2 4c4-4 8-4 10-2L5 12z" fill="#4a3328" /></g></svg>}><Chrome /></Slot>
      <Slot dot>
        <svg width="29" height="29" viewBox="0 0 29 29" fill="none"><path d="M4 3h12v12H4z" fill="#e4e4e4" /><path d="M2.500 15V2.500H17" stroke="#d8400c" strokeWidth="3" strokeDasharray="3 1.500" /><path d="M1 15h10" stroke="#d8400c" strokeWidth="3" strokeDasharray="3 1.500" /><path d="M15.500 4v16M9 16.500h13" stroke="#8a8f94" strokeWidth="2.800" /><circle cx="25" cy="16" r="2.800" stroke="#28a8ea" strokeWidth="1.800" /><circle cx="14.500" cy="25" r="2.800" stroke="#28a8ea" strokeWidth="1.800" /></svg>
      </Slot>
      <Slot dot>
        <svg width="30" height="30" viewBox="0 0 30 30">
          <defs>
            <linearGradient id="eg" x1="0" y1="0" x2="1" y2=".3"><stop offset="0" stopColor="#1f9ce0" /><stop offset=".5" stopColor="#2cc3d8" /><stop offset="1" stopColor="#62e04a" /></linearGradient>
            <linearGradient id="eb" x1="0" y1="0" x2="1" y2="1"><stop offset="0" stopColor="#1b8ee0" /><stop offset="1" stopColor="#0c3f8a" /></linearGradient>
          </defs>
          <path d="M0 14C1 5 8 0 15 0c9 0 15 6 15 12.500 0 5-4 7.500-8 7.500-4 0-5-2-4-3.500 2-3 0-8-6-8C6 8.500 1 11 0 14z" fill="url(#eg)" />
          <path d="M0 14c1-3.500 6-5.500 11-5.500 4 0 6 1.500 7 3.500-5-1-8 2-8 6 0 6 6 9 11 8 3-.3 5-1.500 6.500-2.500C25 28 20 30 15 30 6 30-.5 23 0 14z" fill="url(#eb)" />
        </svg>
      </Slot>
      <Slot dot>
        <svg width="30" height="30" viewBox="0 0 30 30"><path d="M22 0l8 3.500v23L22 30z" fill="#2aa6f0" /><path d="M22 0v8.500L4 23l-4-2.500v-1.500z" fill="#1173c4" /><path d="M22 30v-8.500L4 7 0 9.500V11z" fill="#1c8ce0" /></svg>
      </Slot>
      <Slot dot>
        <svg width="27" height="27" viewBox="0 0 27 27"><defs><linearGradient id="ph" x1="0" y1="0" x2="1" y2="1"><stop offset="0" stopColor="#1d7fd8" /><stop offset="1" stopColor="#5b3fb8" /></linearGradient></defs><rect width="27" height="27" rx="3.500" fill="url(#ph)" /><path d="M1 26l11-14c1-1.200 2.500-1.200 3.500 0L26 25c-.5 1-1.500 2-3 2h-4.500l-5-6.500L7 27H3.500C2.500 27 1.500 26.800 1 26z" fill="#3cc8f2" /><circle cx="20" cy="5" r="2.600" fill="#fff" /></svg>
      </Slot>
    </div>
    <svg width="12" height="8" fill="none" stroke="#222" strokeWidth="1.500" className="ml-[114px] shrink-0"><path d="M.7 7L6 1.500 11.300 7" /></svg>
    <svg width="19" height="15" viewBox="0 0 19 15" fill="none" stroke="#222" strokeWidth="1.400" className="-mt-[3px] ml-[24px] shrink-0"><path d="M.7 5.500C6-.5 13-.5 18.300 5.500M3.500 8.500c3.500-4 8.500-4 12 0M6.300 11.500c2-2.200 4.400-2.200 6.400 0" /><circle cx="9.500" cy="13.300" r="1" fill="#222" /></svg>
    <svg width="20" height="14" viewBox="0 0 20 14" fill="none" stroke="#222" strokeWidth="1.300" className="-mt-[2px] ml-[11px] shrink-0"><path d="M.7 4.500h3L8.500.7v12.600L3.700 9.500h-3zM13 4.500l5.500 5.500M18.500 4.500L13 10" /></svg>
    <svg width="21" height="17" viewBox="0 0 21 17" fill="none" stroke="#222" strokeWidth="1.400" className="-mt-[3px] ml-[10px] shrink-0"><path d="M10 4.500h6.500a1.500 1.500 0 011.500 1.500v7.500a1.500 1.500 0 01-1.500 1.500H5v-3M18.500 8h1.500v3.500h-1.500" /><path d="M5.500 0v3M2 3h7v3c0 2-1.500 3.500-3.500 3.500S2 8 2 6zM5.500 9.500V13" fill="#222" /></svg>
    <div className="-mt-[3px] ml-[13px] w-[82px] shrink-0 text-right text-[15px] leading-[20px] tracking-[-0.450px] text-[#222]">
      <div className="tracking-[-0.600px]">15:45</div>
      <div>07/11/2023</div>
    </div>
    <svg width="17" height="19" viewBox="0 0 17 19" fill="#0a4fa8" className="ml-[11px] shrink-0"><path d="M8.500 0a6 6 0 016 6v5l2 3.500v1H.5v-1l2-3.500V6a6 6 0 016-6zM6 16.500h5a2.500 2.500 0 01-5 0z" /></svg>
  </div>
);

export default function App() {
  return (
    <div className="flex h-[1080px] w-[1920px] flex-col overflow-hidden bg-[#eee] font-['Open_Sans','Noto_Sans',sans-serif]">
      <div className="flex h-[1020px] shrink-0">
        <Word />
        <Excel />
      </div>
      <Taskbar />
    </div>
  );
}
